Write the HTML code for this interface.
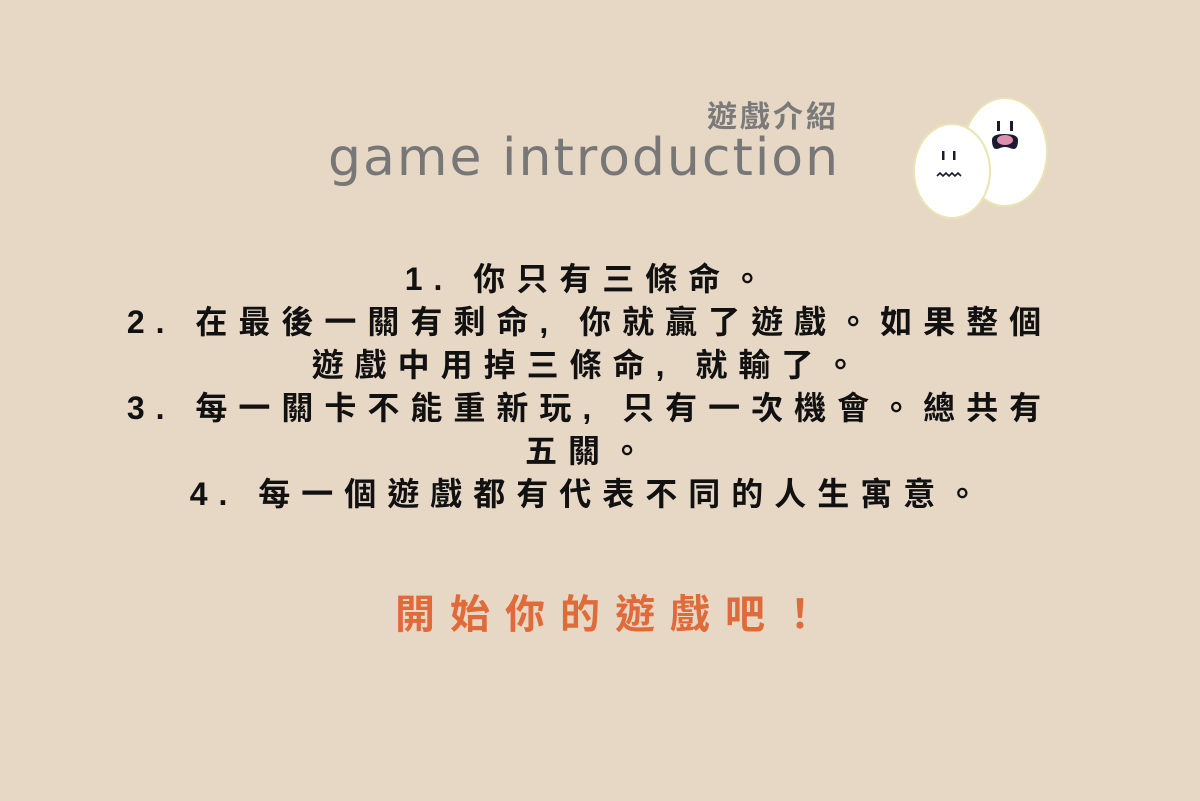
<!DOCTYPE html>
<html><head><meta charset="utf-8"><style>
body{margin:0;width:1200px;height:801px;background:#e7d8c6;overflow:hidden;position:relative;font-family:"Liberation Sans","Noto Sans CJK TC",sans-serif}
.t1{position:absolute;left:707px;top:92px;font-size:30px;font-weight:bold;color:#7a7a7a;letter-spacing:3px}
.t2{position:absolute;left:328px;top:128px;font-family:"DejaVu Sans",sans-serif;font-size:52px;color:#777;letter-spacing:2px;white-space:nowrap}
.main{position:absolute;left:-16px;width:1200px;top:258px;text-align:center;font-size:32px;font-weight:bold;line-height:43px;letter-spacing:11px;color:#111;padding-left:11px;box-sizing:border-box}
.go{position:absolute;left:0;width:1200px;top:582px;text-align:center;font-size:40px;font-weight:bold;color:#e06b3a;letter-spacing:15px;padding-left:30px;box-sizing:border-box}
</style></head><body>
<div class="t1">遊戲介紹</div>
<div class="t2">game introduction</div>
<svg style="position:absolute;left:900px;top:90px" width="160" height="140">
<ellipse cx="105" cy="62" rx="42" ry="54" fill="#fff" stroke="#e8e4b4" stroke-width="2"/>
<rect x="97" y="31" width="3" height="10" fill="#1a1a33"/><rect x="110" y="31" width="3" height="10" fill="#1a1a33"/>
<path d="M92 50 Q92 44 104 44 Q118 44 118 50 Q118 62 110 58 Q105 56 100 58 Q92 62 92 50Z" fill="#1a1a33"/>
<ellipse cx="105" cy="50" rx="8" ry="5" fill="#dc8fae"/>
<ellipse cx="52" cy="81" rx="38" ry="47" fill="#fff" stroke="#e8e4b4" stroke-width="2"/>
<rect x="42" y="61" width="2.5" height="9" fill="#1a1a33"/><rect x="53" y="61" width="2.5" height="9" fill="#1a1a33"/>
<path d="M37 86 l3 -3 3 3 3 -3 3 3 3 -3 3 3 3 -3 3 3" stroke="#1a1a33" stroke-width="1.6" fill="none"/>
</svg>
<div class="main">1. 你只有三條命。<br>2. 在最後一關有剩命, 你就贏了遊戲。如果整個<br>遊戲中用掉三條命, 就輸了。<br>3. 每一關卡不能重新玩, 只有一次機會。總共有<br>五關。<br>4. 每一個遊戲都有代表不同的人生寓意。</div>
<div class="go">開始你的遊戲吧！</div>
</body></html>
